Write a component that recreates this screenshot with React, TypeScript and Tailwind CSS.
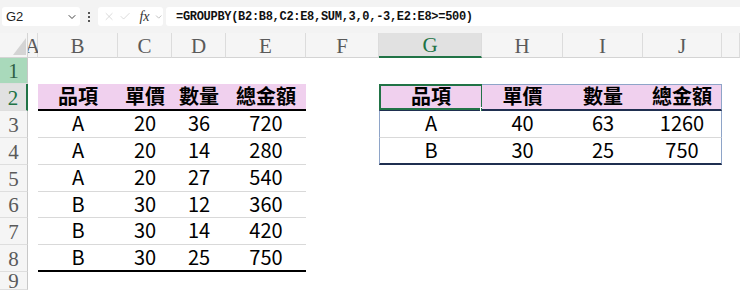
import { ChevronDown, X, Check } from 'lucide-react'

const COLS = ['A', 'B', 'C', 'D', 'E', 'F', 'G', 'H', 'I', 'J', 'K']
const ROWS = [1, 2, 3, 4, 5, 6, 7, 8, 9]

const left: Record<number, string[]> = {
  2: ['品項', '單價', '數量', '總金額'],
  3: ['A', '20', '36', '720'],
  4: ['A', '20', '14', '280'],
  5: ['A', '20', '27', '540'],
  6: ['B', '30', '12', '360'],
  7: ['B', '30', '14', '420'],
  8: ['B', '30', '25', '750'],
}

const right: Record<number, string[]> = {
  2: ['品項', '單價', '數量', '總金額'],
  3: ['A', '40', '63', '1260'],
  4: ['B', '30', '25', '750'],
}

const cellFont = { fontFamily: '"Noto Sans CJK TC", "Noto Sans", sans-serif' }
const headFont = { fontFamily: '"Liberation Serif", serif' }

function Cell({ row, col }: { row: number; col: number }) {
  // col index 0 = A
  let text = ''
  let cls = 'flex items-center justify-center text-[20px] text-black leading-none'
  if (left[row] && col >= 1 && col <= 4) {
    text = left[row][col - 1]
    if (row === 2) cls += ' bg-[#f0d0ee] font-bold border-b-2 border-black'
    else if (row === 8) cls += ' border-b-2 border-black'
    else cls += ' border-b border-[#d9d9d9]'
  }
  if (right[row] && col >= 6 && col <= 9) {
    text = right[row][col - 6]
    if (row === 2) cls += ' bg-[#f0d0ee] font-bold border-t border-t-[#8ea4c8] border-b-2 border-b-[#1f2f50]'
    else if (row === 4) cls += ' border-b-2 border-b-[#1f2f50]'
    else cls += ' border-b border-b-[#d9d9d9]'
    if (col === 6) cls += ' border-l border-l-[#8ea4c8]'
    if (col === 9) cls += ' border-r border-r-[#8ea4c8]'
  }
  const selected = row === 2 && col === 6
  return (
    <div className={`${cls} relative`} style={cellFont}>
      <span className="pb-[2px]">{text}</span>
      {selected && (
        <>
          <div className="absolute inset-[-1px] border-2 border-[#217346]" />
          <div className="absolute right-[-3px] bottom-[-3px] w-[5px] h-[5px] bg-[#217346] border border-white" />
        </>
      )}
    </div>
  )
}

export default function App() {
  return (
    <div className="w-[740px] h-[290px] overflow-hidden bg-white">
      {/* formula bar */}
      <div className="h-[33px] bg-[#f3f3f3] flex items-start pt-[7px] gap-[3px]">
        <div className="ml-[2px] w-[78px] h-[19px] bg-white rounded-[3px] flex items-center justify-between pl-[4px] pr-[2px]">
          <span className="text-[13px] text-[#222]" style={{ fontFamily: '"Liberation Sans", sans-serif' }}>G2</span>
          <ChevronDown size={12} strokeWidth={2} className="text-[#444]" />
        </div>
        <div className="w-[12px] h-[19px] flex flex-col items-center justify-center gap-[2px]">
          <span className="w-[2px] h-[2px] bg-[#555]" />
          <span className="w-[2px] h-[2px] bg-[#555]" />
          <span className="w-[2px] h-[2px] bg-[#555]" />
        </div>
        <div className="w-[65px] h-[19px] bg-white rounded-[3px] flex items-center pl-[5px] gap-[4px]">
          <X size={13} strokeWidth={1.2} className="text-[#c4c4c4]" />
          <Check size={13} strokeWidth={1.2} className="text-[#c4c4c4]" />
          <span className="italic text-[14px] text-[#333] ml-[4px] leading-none" style={headFont}>fx</span>
          <ChevronDown size={10} strokeWidth={1.5} className="text-[#999]" />
        </div>
        <div className="flex-1 h-[19px] bg-white rounded-l-[3px] flex items-center pl-[10px]">
          <span
            className="text-[12px] tracking-[-0.3px] text-[#111] font-semibold"
            style={{ fontFamily: '"Liberation Mono", monospace' }}
          >
            =GROUPBY(B2:B8,C2:E8,SUM,3,0,-3,E2:E8&gt;=500)
          </span>
        </div>
      </div>

      {/* sheet */}
      <div className="grid grid-cols-[28px_10px_80px_54px_54px_80px_73px_103px_81px_80px_79px_18px] grid-rows-[25px_26px_27px_27px_27px_27px_26px_27px_27px_18px]">
        {/* corner */}
        <div className="bg-[#f5f5f5] border-r border-b border-[#d4d4d4] relative">
          <div className="absolute right-[1px] bottom-[2px] w-0 h-0 border-l-[13px] border-l-transparent border-b-[17px] border-b-[#d4d4d4]" />
        </div>
        {COLS.map((c, i) => (
          <div
            key={c}
            className={`flex items-center justify-center text-[21px] leading-none border-r border-[#dcdcdc] ${
              i === 6
                ? 'bg-[#e1e1e1] text-[#217346] border-b-2 border-b-[#217346]'
                : 'bg-[#f5f5f5] text-[#5a5a5a] border-b border-b-[#d4d4d4]'
            }`}
            style={headFont}
          >
            <span className="pt-[2px]">{c === 'K' ? '' : c}</span>
          </div>
        ))}
        {ROWS.map((r) => (
          <Row key={r} r={r} />
        ))}
      </div>
    </div>
  )
}

function Row({ r }: { r: number }) {
  const head =
    r === 1
      ? 'bg-[#a9d9bb] text-[#2f5e45] border-r border-r-[#c8c8c8]'
      : r === 2
        ? 'bg-[#e1e1e1] text-[#217346] border-r-2 border-r-[#217346]'
        : 'bg-[#f5f5f5] text-[#5a5a5a] border-r border-r-[#c8c8c8]'
  return (
    <>
      <div
        className={`flex items-center justify-center text-[21px] leading-none border-b border-b-[#dedede] ${head}`}
        style={headFont}
      >
        <span className="pt-[2px]">{r}</span>
      </div>
      {COLS.map((_, i) => (
        <Cell key={i} row={r} col={i} />
      ))}
    </>
  )
}
